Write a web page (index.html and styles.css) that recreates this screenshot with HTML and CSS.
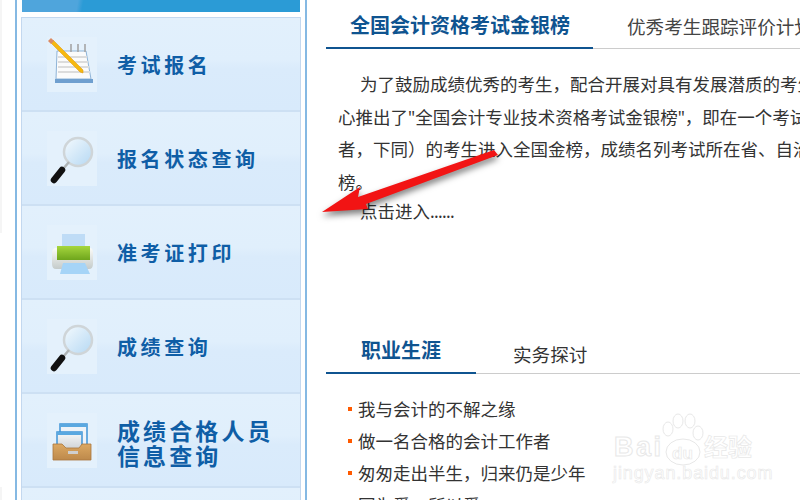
FILE: index.html
```html
<!DOCTYPE html>
<html lang="zh-CN">
<head>
    <meta charset="UTF-8">
    <title>全国会计资格考试</title>
    <link rel="stylesheet" href="styles.css">
</head>
<body>
    <svg class="defs" width="0" height="0">
        <defs>
            <linearGradient id="lens" x1="0" y1="0" x2="1" y2="1">
                <stop offset="0" stop-color="#f4fafe"/>
                <stop offset="1" stop-color="#b5d8f3"/>
            </linearGradient>
            <linearGradient id="body" x1="0" y1="0" x2="0" y2="1">
                <stop offset="0" stop-color="#fbfbf8"/>
                <stop offset="1" stop-color="#c4cbca"/>
            </linearGradient>
            <linearGradient id="green" x1="0" y1="0" x2="0" y2="1">
                <stop offset="0" stop-color="#a6d63e"/>
                <stop offset="1" stop-color="#6ea51c"/>
            </linearGradient>
            <linearGradient id="box" x1="0" y1="0" x2="0" y2="1">
                <stop offset="0" stop-color="#dca862"/>
                <stop offset="1" stop-color="#bd894b"/>
            </linearGradient>
            <linearGradient id="sheet" x1="0" y1="0" x2="0" y2="1">
                <stop offset="0" stop-color="#f8f9fa"/>
                <stop offset="1" stop-color="#cfd3d6"/>
            </linearGradient>
            <g id="glass">
                <circle cx="31" cy="21" r="14" fill="url(#lens)" stroke="#cfd5d8" stroke-width="2.5"/>
                <path d="M22 31L16 38" stroke="#aeb4b6" stroke-width="2.5"/>
                <path d="M15 39L7 49" stroke="#111" stroke-width="6.5" stroke-linecap="round"/>
            </g>
        </defs>
    </svg>

    <div class="edge"></div>
    <div class="side">
        <div class="banner"></div>
        <ul class="menu">
            <li>
                <svg class="ico" viewBox="0 0 50 55">
                    <path d="M10 14H39L44 42H9Z" fill="#fbfbfb" stroke="#8fb4d8"/>
                    <path d="M11 20H40M11 25H41M11 30H42M11 35H43" stroke="#dcdcdc" stroke-width="2"/>
                    <path d="M8 42H46V46H8Z" fill="#6f9fcf"/>
                    <path d="M24 7V15M31 7V15M38 7V15" stroke="#a5a5a5" stroke-width="1.6"/>
                    <path d="M3 5L6 3L36 33L36 36L33 35Z" fill="#f6b90f" stroke="#e39a12" stroke-width=".6"/>
                    <path d="M1 4L4 1L7 4L4 7Z" fill="#dc8a62"/>
                </svg>
                <span>考试报名</span>
            </li>
            <li>
                <svg class="ico" viewBox="0 0 50 55"><use href="#glass"/></svg>
                <span>报名状态查询</span>
            </li>
            <li>
                <svg class="ico" viewBox="0 0 50 55">
                    <path d="M15 9H38V24H15Z" fill="#bfdcf6"/>
                    <path d="M5 28Q5 23 9 23H43Q46 23 46 28V39Q46 44 42 44H9Q5 44 5 39Z" fill="url(#body)"/>
                    <path d="M10 21H43V35H10Z" fill="url(#green)"/>
                    <path d="M16 38H38L43 49H13Z" fill="#a5d4f7"/>
                </svg>
                <span>准考证打印</span>
            </li>
            <li>
                <svg class="ico" viewBox="0 0 50 55"><use href="#glass"/></svg>
                <span>成绩查询</span>
            </li>
            <li>
                <svg class="ico" viewBox="0 0 50 55">
                    <path d="M13 11H40V32H13Z" fill="#eef3f8" stroke="#3f94d6" stroke-width="1.5"/>
                    <path d="M13 11H40V14H13Z" fill="#5aa8e0"/>
                    <path d="M10 19H35V36H10Z" fill="url(#sheet)" stroke="#3f94d6" stroke-width="1.5"/>
                    <path d="M10 19H35V22H10Z" fill="#5aa8e0"/>
                    <path d="M6 31H15L19 35H32L35 31H44V47H6Z" fill="url(#box)" stroke="#a9773c" stroke-width=".8"/>
                    <path d="M21 38H31V41H21Z" fill="#cfcfcf"/>
                </svg>
                <span class="long">成绩合格人员<br>信息查询</span>
            </li>
            <li></li>
        </ul>
    </div>

    <div class="main">
        <div class="tabs">
            <div class="tab on tab-top">全国会计资格考试金银榜</div>
            <div class="tab tab-next">优秀考生跟踪评价计划</div>
        </div>
        <p class="intro">为了鼓励成绩优秀的考生，配合开展对具有发展潜质的考生的选拔培养工作，<br>心推出了"全国会计专业技术资格考试金银榜"，即在一个考试年度内<br>者，下同）的考生进入全国金榜，成绩名列考试所在省、自治区、直辖市<br>榜。</p>
        <p class="more">点击进入<span class="dots">......</span></p>

        <div class="tabs tabs-low">
            <div class="tab on tab-job">职业生涯</div>
            <div class="tab tab-work">实务探讨</div>
        </div>
        <ul class="news">
            <li>我与会计的不解之缘</li>
            <li>做一名合格的会计工作者</li>
            <li>匆匆走出半生，归来仍是少年</li>
            <li>因为爱，所以爱</li>
        </ul>
    </div>

    <svg class="arrow" viewBox="0 0 800 500">
        <polygon points="322,212 360,187 358,197 494,150 498,155 366,204 368,209" fill="#f21414"/>
    </svg>

    <svg class="mark" viewBox="0 0 800 500">
        <g fill="#fff" stroke="#e8e8e8">
            <ellipse cx="668" cy="429" rx="5" ry="7"/>
            <ellipse cx="678" cy="421" rx="5" ry="7"/>
            <ellipse cx="690" cy="421" rx="5" ry="7"/>
            <ellipse cx="698" cy="433" rx="5" ry="7"/>
            <ellipse cx="683" cy="452" rx="17" ry="13"/>
            <text x="614" y="456" class="mark-big">Bai</text>
            <text x="672" y="459" class="mark-du">du</text>
            <text x="704" y="456" class="mark-cn">经验</text>
            <text x="613" y="479" class="mark-url">jingyan.baidu.com</text>
        </g>
    </svg>
</body>
</html>
```

FILE: styles.css
```css
*{margin:0;padding:0;box-sizing:border-box;}
li{list-style:none;}
html,body{height:500px;overflow:hidden;}
body{display:flex;background:#fff;font-family:"Noto Sans","Noto Sans CJK SC",sans-serif;color:#333;}
.defs{position:absolute;}

.edge{width:2px;height:500px;margin-right:13px;flex:none;background:linear-gradient(#f5f5f5 233px,#fff 233px,#fff 487px,#f5f5f5 487px);}

.side{width:292px;height:500px;flex:none;border-left:2px solid #85b9e3;border-right:2px solid #85b9e3;padding:0 4px;}
.banner{height:12px;margin:0 1px 5px;background:linear-gradient(100deg,#4fa5dc 0,#4fa5dc 20%,#2b9bd6 22%,#2b9bd6 100%);}
.menu{border:1px solid #c3d8ef;border-bottom:none;}
.menu li{height:94px;padding:19px 0 0 25px;display:flex;align-items:flex-start;border-bottom:2px solid #cde0f3;background:linear-gradient(#e2f0fc 0,#e0effc 45%,#daebfb 55%,#d8eafb 100%);}
.ico{width:50px;height:55px;flex:none;background:#e4f1fc;margin-right:20px;}
.menu span{font-size:20px;line-height:57px;font-weight:bold;letter-spacing:3.6px;color:#0f5ea6;white-space:nowrap;}
.menu span.long{font-size:23px;line-height:25px;letter-spacing:3.1px;padding-top:6px;}

.main{width:474px;height:500px;flex:none;margin-left:19px;overflow:hidden;}
.tabs{display:flex;height:49px;border-bottom:1px solid #ccc;white-space:nowrap;}
.tab{font-size:18.6px;line-height:54px;flex:none;}
.tab.on{height:49px;border-bottom:2px solid #0f5490;color:#0f5490;font-weight:bold;font-size:20px;line-height:52px;}
.tab-top{width:267px;padding-left:24px;}
.tab-next{margin-left:34px;color:#444;}
.intro{margin:19px 0 0 12px;font-size:17.5px;line-height:32.6px;text-indent:22px;white-space:nowrap;}
.more{margin:-3px 0 0 34px;font-size:17.5px;line-height:32.6px;}
.dots{letter-spacing:-.7px;}

.tabs-low{margin-top:96px;height:50px;}
.tabs-low .tab-job{width:150px;height:50px;padding-left:35px;line-height:54px;}
.tabs-low .tab-work{margin-left:37px;line-height:62px;}

.news{margin-top:19px;padding-left:22px;}
.news li{display:flex;align-items:center;height:32px;font-size:17.5px;white-space:nowrap;}
.news li:before{content:"";width:4px;height:4px;margin-right:6px;background:#ff5a00;}

.arrow{position:absolute;left:0;top:0;width:800px;height:500px;filter:drop-shadow(0 4px 3px rgba(0,0,0,.5));}
.mark{position:absolute;left:0;top:0;width:800px;height:500px;}
.mark-big{font:bold 27px "Liberation Sans",sans-serif;letter-spacing:2.5px;}
.mark-du{font:bold 17px "Liberation Sans",sans-serif;stroke-width:.7;}
.mark-cn{font:bold 24px "Noto Sans CJK SC",sans-serif;stroke-width:.7;}
.mark-url{font:18px "Liberation Sans",sans-serif;letter-spacing:.9px;stroke-width:.6;}
```
